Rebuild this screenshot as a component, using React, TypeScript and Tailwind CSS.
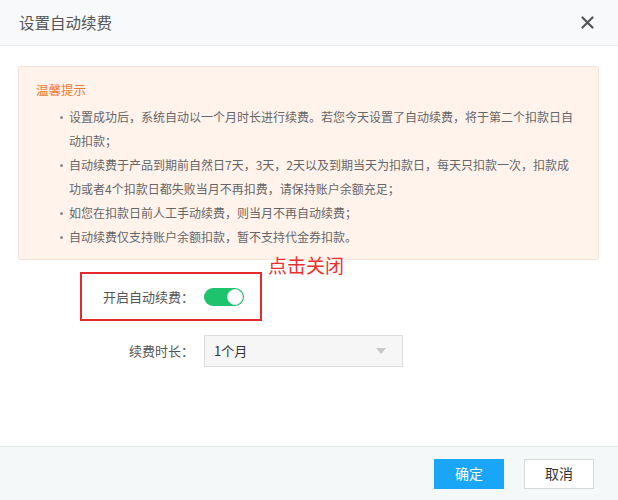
import React from "react";

const tips: string[][] = [
  ["设置成功后，系统自动以一个月时长进行续费。若您今天设置了自动续费，将于第二个扣款日自", "动扣款；"],
  ["自动续费于产品到期前自然日7天，3天，2天以及到期当天为扣款日，每天只扣款一次，扣款成", "功或者4个扣款日都失败当月不再扣费，请保持账户余额充足；"],
  ["如您在扣款日前人工手动续费，则当月不再自动续费；"],
  ["自动续费仅支持账户余额扣款，暂不支持代金券扣款。"],
];

const font = { fontFamily: '"Noto Sans CJK SC", "Noto Sans", sans-serif' };

const App: React.FC = () => {
  return (
    <div className="w-[618px] h-[500px] flex flex-col bg-white" style={font}>
      {/* header */}
      <div className="h-[46px] shrink-0 flex items-center justify-between pl-[19px] pr-[24px] bg-[#f7f9fa] border-b border-[#eceff1]">
        <h1 className="text-[15.5px] text-[#555]">设置自动续费</h1>
        <svg width="13" height="13" viewBox="0 0 13 13" className="text-[#555]">
          <path d="M1.5 1.5 L11.5 11.5 M11.5 1.5 L1.5 11.5" stroke="currentColor" strokeWidth="2.2" strokeLinecap="round" />
        </svg>
      </div>

      {/* body */}
      <div className="flex-1 relative pt-[20px]">
        <div className="mx-[18px] w-[581px] bg-[#fff3ec] border border-[#f7e2d7] rounded-[2px] pt-[11px] pb-[10px] pl-[17px] pr-[10px]">
          <div className="text-[12.5px] leading-[24px] text-[#f2782f]">温馨提示</div>
          <ul className="mt-[3px] pl-[33px]">
            {tips.map((lines, i) => (
              <li key={i} className="relative text-[12px] leading-[24px] text-[#666] whitespace-nowrap">
                <span className="absolute left-[-9px] top-[11px] w-[3px] h-[3px] rounded-full bg-[#888]" />
                {lines.map((l, j) => (
                  <div key={j}>{l}</div>
                ))}
              </li>
            ))}
          </ul>
        </div>

        {/* form */}
        <div className="mt-[21px] flex flex-col gap-[22px]">
          <div className="h-[32px] flex items-center">
            <div className="w-[194px] text-right text-[13px] text-[#555]">开启自动续费：</div>
            <div className="ml-[10px] w-[40px] h-[18px] rounded-full bg-[#1ec36d] flex items-center justify-end pr-[1px]">
              <div className="w-[16px] h-[16px] rounded-full bg-white border border-[#dfe7e2]" />
            </div>
          </div>
          <div className="h-[32px] flex items-center">
            <div className="w-[194px] text-right text-[13px] text-[#555]">续费时长：</div>
            <div className="ml-[10px] w-[199px] h-[32px] bg-[#f6f6f6] border border-[#dcdcdc] flex items-center justify-between pl-[9px] pr-[16px]">
              <span className="text-[13px] text-[#333]">1个月</span>
              <svg width="10" height="6" viewBox="0 0 10 6">
                <path d="M0 0 L10 0 L5 6 Z" fill="#c8c8c8" />
              </svg>
            </div>
          </div>
        </div>

        {/* annotation overlay */}
        <div className="absolute left-[268px] top-[207px] text-[19px] leading-[24px] text-[#e8312f]">点击关闭</div>
        <div className="absolute left-[80px] top-[226px] w-[182px] h-[49px] border-2 border-[#e42a2a]" />
      </div>

      {/* footer */}
      <div className="h-[54px] shrink-0 bg-[#f5f8f9] border-t border-[#e6e9eb] flex items-center justify-end gap-[20px] pr-[24px]">
        <button className="w-[70px] h-[30px] bg-[#19a6f7] text-white text-[14px]">确定</button>
        <button className="w-[70px] h-[30px] bg-white border border-[#d9d9d9] text-[#333] text-[14px]">取消</button>
      </div>
    </div>
  );
};

export default App;
